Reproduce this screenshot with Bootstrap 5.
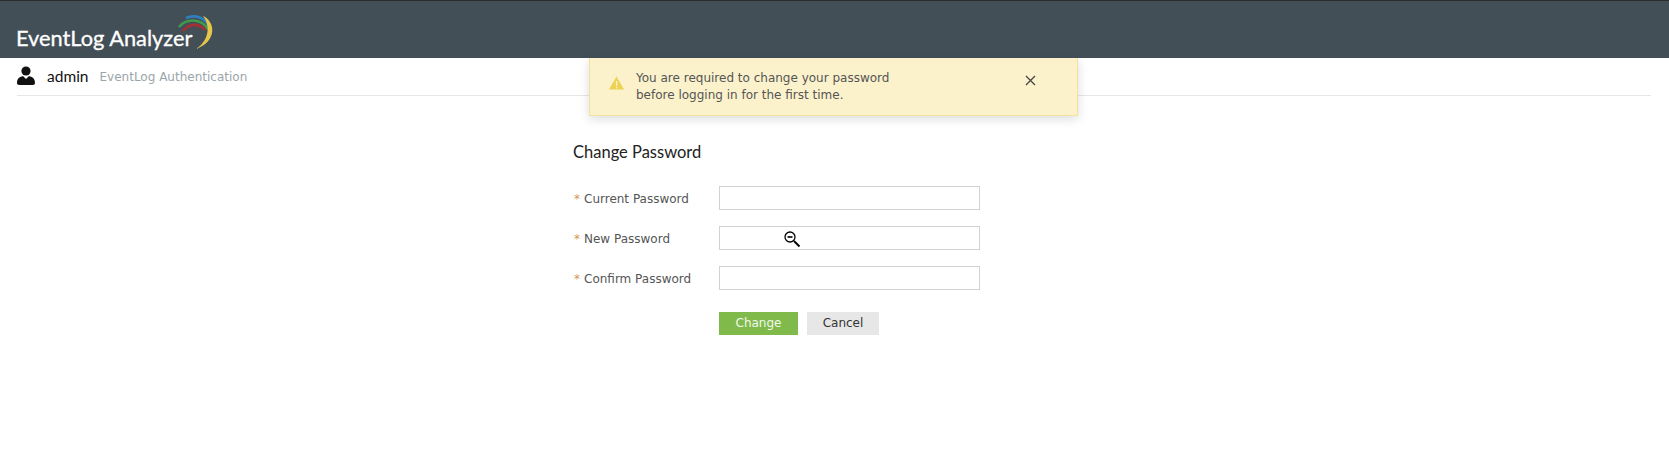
<!DOCTYPE html>
<html>
<head>
  <title>EventLog Analyzer</title>
  <link rel="stylesheet" href="https://cdn.jsdelivr.net/npm/bootstrap@5.3.0/dist/css/bootstrap.min.css">
  <style>
    body { background: #fff; font-family: "DejaVu Sans", sans-serif; font-size: 12px; color: #444; height: 450px; overflow: hidden; }
    .top-bar { height: 58px; background: #434f57; border-top: 1px solid #2b2b2b; padding: 0 16px 9px; }
    .brand-name { font-family: Lato, sans-serif; font-size: 21.8px; color: #fff; line-height: 1; -webkit-text-stroke: .3px #fff; }
    .brand-arc { margin-left: -21px; margin-bottom: -3px; }
    .user-strip { height: 38px; margin: 0 18px 0 17px; border-bottom: 1px solid #e6e6e6; }
    .user-icon { margin-top: -3px; }
    .user-name { font-family: Lato, sans-serif; font-size: 15.5px; color: #111; margin-left: 12px; }
    .user-sub { font-size: 12px; color: #9aa5ab; margin-left: 11px; }
    .warn-box { position: absolute; left: 589px; top: 58px; width: 489px; height: 58px; background: #fbf2cc; border: 1px solid #f3e29b; border-top: 0; box-shadow: 0 3px 10px rgba(0,0,0,.14); padding: 0 0 0 20px; color: #555; line-height: 16.5px; }
    .warn-icon { margin-top: -7px; margin-left: -1px; }
    .warn-text { margin-left: 12px; width: 389px; }
    .warn-close { margin-top: -12px; }
    .pw-form { width: 407px; margin: 0 0 0 573px; padding-top: 46px; }
    .pw-title { font-family: Lato, sans-serif; font-size: 16.5px; font-weight: 400; color: #222; margin-bottom: 24px; line-height: 20px; }
    .pw-row { height: 24px; margin-bottom: 16px; }
    .pw-label { width: 146px; color: #555; padding-left: 1px; margin-top: 2px; }
    .pw-star { color: #d8954f; margin-right: 4px; }
    .pw-input { width: 261px; height: 24px; border: 1px solid #d2d2d2; border-radius: 0; padding: 0 6px; }
    .pw-actions { margin: 22px 0 0 146px; gap: 9px; }
    .pw-btn { height: 23px; border: 0; border-radius: 0; font-size: 12px; padding: 0; line-height: 23px; }
    .pw-btn-ok { width: 79px; background: #7fba4a; color: #f3f8ec; }
    .pw-btn-no { width: 72px; background: #e7e7e7; color: #333; }
    .zoom-cursor { position: absolute; left: 784px; top: 231px; }
  </style>
</head>
<body class="m-0">
  <div class="top-bar d-flex align-items-end">
    <span class="brand-name">EventLog Analyzer</span>
    <svg class="brand-arc" width="50" height="38" viewBox="0 0 50 38" fill="none">
      <path d="M12 17 C18 9 28 9 34 16" stroke="#a62f33" stroke-width="2.6"/>
      <path d="M8 13 C15 4 30 4 37 15" stroke="#3f9a4c" stroke-width="2.6"/>
      <path d="M15 4 C25 0 35 4 39 14" stroke="#2f7fc0" stroke-width="2.6"/>
      <path d="M32 2 C44 7 47 27 25 35 C36 28 41 14 32 2 Z" fill="#e5c64a"/>
    </svg>
  </div>

  <div class="user-strip d-flex align-items-center">
    <svg class="user-icon" width="18" height="19" viewBox="0 0 18 19" fill="#111">
      <circle cx="9" cy="5" r="4.6"/>
      <path d="M0 17 C0 12 3 11 6 10 L9 13 L12 10 C15 11 18 12 18 17 C18 19 16 19 14 19 L4 19 C2 19 0 19 0 17 Z"/>
    </svg>
    <span class="user-name">admin</span>
    <span class="user-sub">EventLog Authentication</span>
  </div>

  <div class="warn-box d-flex align-items-center">
    <svg class="warn-icon" width="15" height="14" viewBox="0 0 15 14">
      <path d="M7.5 0.5 L15 13.5 L0 13.5 Z" fill="#edd150"/>
      <rect x="6.9" y="5" width="1.4" height="5" fill="#fbf2cc"/>
      <rect x="6.9" y="11" width="1.4" height="1.4" fill="#fbf2cc"/>
    </svg>
    <div class="warn-text">You are required to change your password<br>before logging in for the first time.</div>
    <svg class="warn-close" width="11" height="11" viewBox="0 0 11 11" stroke="#444" stroke-width="1.3">
      <path d="M1 1 L10 10 M10 1 L1 10"/>
    </svg>
  </div>

  <form class="pw-form">
    <h5 class="pw-title">Change Password</h5>
    <div class="pw-row d-flex align-items-center">
      <label class="pw-label"><span class="pw-star">*</span>Current Password</label>
      <input class="pw-input" type="password">
    </div>
    <div class="pw-row d-flex align-items-center">
      <label class="pw-label"><span class="pw-star">*</span>New Password</label>
      <input class="pw-input" type="password">
    </div>
    <div class="pw-row d-flex align-items-center">
      <label class="pw-label"><span class="pw-star">*</span>Confirm Password</label>
      <input class="pw-input" type="password">
    </div>
    <div class="pw-actions d-flex">
      <button class="btn pw-btn pw-btn-ok" type="button">Change</button>
      <button class="btn pw-btn pw-btn-no" type="button">Cancel</button>
    </div>
  </form>

  <svg class="zoom-cursor" width="17" height="17" viewBox="0 0 17 17" fill="none" stroke="#000">
    <circle cx="6" cy="6" r="5" stroke-width="1.3" fill="#fff"/>
    <path d="M3.5 6 H8.5" stroke-width="1.6"/>
    <path d="M10 10 L15.5 15.5" stroke-width="2"/>
  </svg>
</body>
</html>
